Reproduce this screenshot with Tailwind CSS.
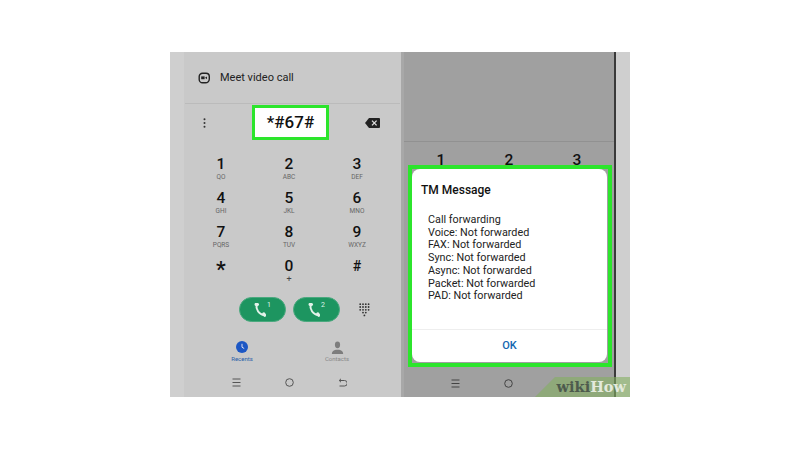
<!DOCTYPE html>
<html lang="en">
<head>
    <meta charset="UTF-8">
    <title>TM Message</title>
    <script src="https://cdn.jsdelivr.net/npm/@tailwindcss/browser@4"></script>
</head>
<body class="bg-white h-screen overflow-hidden font-['Roboto','Liberation_Sans',sans-serif]">
    <div class="relative ml-[170px] mt-[52px] flex h-[345px] w-[460px] overflow-hidden bg-[#cfcfcf]">

        <!--left phone-->
        <div class="ml-[14px] flex w-[217px] flex-col bg-[#c9c9c9]">
            <div class="flex h-[51px] items-center pl-[14px] pt-[1px] text-[11px] text-[#222]">
                <svg class="mr-[10px] h-[12px] w-[12px]" viewBox="0 0 12 12" fill="none" stroke="#222" stroke-width="1.4">
                    <path d="M4.500 1.200h3.500a3.300 3.300 0 0 1 3.300 3.300v2.500a3.800 3.800 0 0 1-3.800 3.800H4.500A3.300 3.300 0 0 1 1.200 7.500V4.500a3.300 3.300 0 0 1 3.300-3.300z"/>
                    <rect x="3.200" y="4.400" width="3.400" height="2.800" fill="#222" stroke="none"/>
                    <path d="M7 5.800l2-1.300v2.700z" fill="#222" stroke="none"/>
                </svg>
                Meet video call
            </div>

            <div class="mx-[1px] flex h-[38px] items-center border-t border-[#bbb] pl-[18px] pr-[20px]">
                <svg class="h-[10px] w-[3px]" viewBox="0 0 3 10" fill="#333"><circle cx="1.500" cy="1.200" r="1"/><circle cx="1.500" cy="5" r="1"/><circle cx="1.500" cy="8.800" r="1"/></svg>
                <span class="flex-1"></span>
                <svg class="h-[10px] w-[15px]" viewBox="0 0 15 10"><path d="M4 0h10a1 1 0 0 1 1 1v8a1 1 0 0 1-1 1H4L0 5z" fill="#222"/><path d="M7 2.600l4.600 4.800M11.600 2.600L7 7.400" stroke="#ddd" stroke-width="1.300"/></svg>
            </div>

            <!--dial keys-->
            <div class="ml-[3px] grid w-[204px] grid-cols-3 pt-[15px] text-center font-medium text-[#111]">
                <div class="h-[34px] text-[15.500px] leading-[17px]">1<div class="text-[6.500px] font-normal leading-[8px] text-[#666]">QO</div></div>
                <div class="h-[34px] text-[15.500px] leading-[17px]">2<div class="text-[6.500px] font-normal leading-[8px] text-[#666]">ABC</div></div>
                <div class="h-[34px] text-[15.500px] leading-[17px]">3<div class="text-[6.500px] font-normal leading-[8px] text-[#666]">DEF</div></div>
                <div class="h-[34px] text-[15.500px] leading-[17px]">4<div class="text-[6.500px] font-normal leading-[8px] text-[#666]">GHI</div></div>
                <div class="h-[34px] text-[15.500px] leading-[17px]">5<div class="text-[6.500px] font-normal leading-[8px] text-[#666]">JKL</div></div>
                <div class="h-[34px] text-[15.500px] leading-[17px]">6<div class="text-[6.500px] font-normal leading-[8px] text-[#666]">MNO</div></div>
                <div class="h-[34px] text-[15.500px] leading-[17px]">7<div class="text-[6.500px] font-normal leading-[8px] text-[#666]">PQRS</div></div>
                <div class="h-[34px] text-[15.500px] leading-[17px]">8<div class="text-[6.500px] font-normal leading-[8px] text-[#666]">TUV</div></div>
                <div class="h-[34px] text-[15.500px] leading-[17px]">9<div class="text-[6.500px] font-normal leading-[8px] text-[#666]">WXYZ</div></div>
                <div class="h-[34px] pt-[3px] text-[22px] leading-[17px]">*</div>
                <div class="h-[34px] text-[15.500px] leading-[17px]">0<div class="text-[9px] font-normal leading-[8px] text-[#444]">+</div></div>
                <div class="h-[34px] text-[14px] leading-[17px]">#</div>
            </div>

            <!--call buttons-->
            <div class="mt-[5px] flex h-[25px] items-center pl-[55px]">
                <div class="flex h-[25px] w-[47px] items-center justify-center rounded-full border border-[#4aa97e] bg-[#1d9560]">
                    <svg class="h-[14px] w-[12px]" viewBox="0 0 12 14" fill="none" stroke="#e2f2e9" stroke-width="2" stroke-linecap="round"><path d="M2.600 1.500C1.600 6.500 5 11.500 10.500 12.300"/><path d="M2 1.400l1.600.1M9.800 10.800l.9 1.500" stroke-width="3"/></svg>
                    <span class="ml-[1px] mb-[8px] text-[7px] leading-none text-[#dff3e8]">1</span>
                </div>
                <div class="ml-[7px] flex h-[25px] w-[47px] items-center justify-center rounded-full border border-[#4aa97e] bg-[#1d9560]">
                    <svg class="h-[14px] w-[12px]" viewBox="0 0 12 14" fill="none" stroke="#e2f2e9" stroke-width="2" stroke-linecap="round"><path d="M2.600 1.500C1.600 6.500 5 11.500 10.500 12.300"/><path d="M2 1.400l1.600.1M9.800 10.800l.9 1.500" stroke-width="3"/></svg>
                    <span class="ml-[1px] mb-[8px] text-[7px] leading-none text-[#dff3e8]">2</span>
                </div>
                <svg class="ml-[19px] h-[14px] w-[11px]" viewBox="0 0 11 14" fill="#333">
                    <circle cx="1.200" cy="1.200" r=".9"/><circle cx="4" cy="1.200" r=".9"/><circle cx="6.800" cy="1.200" r=".9"/><circle cx="9.600" cy="1.200" r=".9"/>
                    <circle cx="1.200" cy="4" r=".9"/><circle cx="4" cy="4" r=".9"/><circle cx="6.800" cy="4" r=".9"/><circle cx="9.600" cy="4" r=".9"/>
                    <circle cx="1.200" cy="6.800" r=".9"/><circle cx="4" cy="6.800" r=".9"/><circle cx="6.800" cy="6.800" r=".9"/><circle cx="9.600" cy="6.800" r=".9"/>
                    <circle cx="4" cy="9.600" r=".9"/><circle cx="6.800" cy="9.600" r=".9"/><circle cx="5.400" cy="12.400" r=".9"/>
                </svg>
            </div>

            <!--tabs-->
            <div class="mt-[19px] flex text-center text-[6px] leading-[8px]">
                <div class="ml-[33px] w-[50px] text-[#2a5fa8]">
                    <svg class="mx-auto mb-[2px] h-[12px] w-[12px]" viewBox="0 0 12 12"><circle cx="6" cy="6" r="6" fill="#1c57c4"/><path d="M6 2.800v3.400l2.200 1.300" fill="none" stroke="#dde" stroke-width="1"/></svg>
                    Recents
                </div>
                <div class="ml-[45px] w-[50px] text-[#888]">
                    <svg class="mx-auto mb-[1px] h-[13px] w-[13px]" viewBox="0 0 13 13" fill="#7d7d7d"><ellipse cx="6.500" cy="3.800" rx="2.600" ry="3.400"/><path d="M0.800 13c0-2.600 2-3.600 4-4.200h3.400c2 .6 4 1.600 4 4.200z"/></svg>
                    Contacts
                </div>
            </div>

            <!--nav bar-->
            <div class="mt-[15px] flex items-center pl-[48px]">
                <svg class="h-[9px] w-[9px]" viewBox="0 0 9 9" stroke="#555" stroke-width="1"><path d="M.5 1h8M.5 4.500h8M.5 8h8"/></svg>
                <svg class="ml-[44px] h-[9px] w-[9px]" viewBox="0 0 9 9" fill="none" stroke="#555" stroke-width="1"><circle cx="4.500" cy="4.500" r="3.800"/></svg>
                <svg class="ml-[44px] h-[9px] w-[9px]" viewBox="0 0 9 9" fill="none" stroke="#555" stroke-width="1"><path d="M1.500 2.500h5a2.500 2.500 0 0 1 0 5.500h-5M3 .8L1.200 2.500 3 4.200"/></svg>
            </div>
        </div>

        <div class="w-[3px] bg-[#a8a8a8]"></div>

        <!--right phone-->
        <div class="flex w-[210px] flex-col bg-[#a0a0a0]">
            <div class="h-[90px] border-b border-[#919191]"></div>
            <div class="mt-[10px] flex pl-[3px] text-center text-[15.500px] font-medium leading-[17px] text-[#111]">
                <span class="w-[68px]">1</span><span class="w-[68px]">2</span><span class="w-[68px]">3</span>
            </div>
            <div class="mt-auto mb-[9px] flex items-center justify-start pl-[47px]">
                <svg class="h-[9px] w-[9px]" viewBox="0 0 9 9" stroke="#444" stroke-width="1"><path d="M.5 1h8M.5 4.500h8M.5 8h8"/></svg>
                <svg class="ml-[44px] h-[9px] w-[9px]" viewBox="0 0 9 9" fill="none" stroke="#444" stroke-width="1"><circle cx="4.500" cy="4.500" r="3.800"/></svg>
            </div>
        </div>
        <div class="w-[2px] bg-[#3a3a3a]"></div>

        <!--number highlight-->
        <div class="absolute left-[82px] top-[53px] flex h-[35px] w-[77px] items-center justify-center border-[3px] border-[#2ce52c] bg-white text-[17px] font-medium text-[#111]">*#67#</div>

        <!--dialog highlight-->
        <div class="absolute left-[238px] top-[113px] flex h-[202px] w-[204px] flex-col border-[4px] border-[#2ce52c] bg-[#a0a0a0]">
            <div class="mb-[1px] mr-[1px] flex flex-1 flex-col rounded-[8px] bg-white text-[#222]">
                <div class="pl-[9px] pt-[13px] text-[12px] font-medium leading-[16px] text-[#111]">TM Message</div>
                <div class="mt-[16px] flex-1 pl-[16px] text-[10.800px] leading-[12.700px]">
                    <div>Call forwarding</div>
                    <div>Voice: Not forwarded</div>
                    <div>FAX: Not forwarded</div>
                    <div>Sync: Not forwarded</div>
                    <div>Async: Not forwarded</div>
                    <div>Packet: Not forwarded</div>
                    <div>PAD: Not forwarded</div>
                </div>
                <div class="flex h-[33px] items-center justify-center border-t border-[#eee] text-[11px] font-medium text-[#1467b0]">OK</div>
            </div>
        </div>

        <!--watermark-->
        <div class="absolute bottom-0 right-0 flex h-[20px] w-[95px] items-center justify-end bg-[#84af61]/60 pr-[4px] font-['DejaVu_Serif',serif] text-[14.500px] font-bold [clip-path:polygon(20px_0,100%_0,100%_100%,0_100%)]">
            <span class="text-[#4d5a4d]">wiki</span><span class="text-[#e4eadc]">How</span>
        </div>
    </div>
</body>
</html>
